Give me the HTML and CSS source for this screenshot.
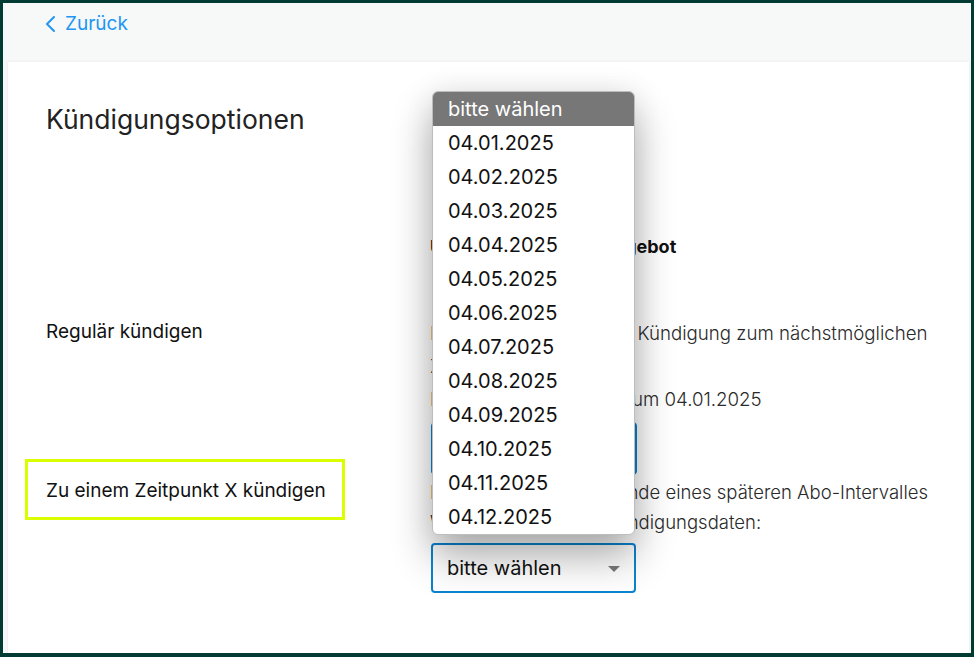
FILE: index.html
```html
<!DOCTYPE html>
<html lang="de">
<head>
<meta charset="utf-8">
<title>Kündigungsoptionen</title>
<link rel="stylesheet" href="styles.css">
</head>
<body>
<div class="frame">
  <div class="topbar">
    <a class="back" href="#">
      <svg class="chev" width="12" height="18" viewBox="0 0 12 18"><polyline points="9,2 2,9 9,16" fill="none" stroke="#2196f3" stroke-width="2" stroke-linecap="round" stroke-linejoin="round"/></svg>
      <span>Zurück</span>
    </a>
  </div>
  <div class="card">
    <h1 class="title">Kündigungsoptionen</h1>
    <div class="grid">
      <div></div>
      <div class="offer">Übersicht zu Ihrem Angebot</div>

      <div class="label label-regular">Regulär kündigen</div>
      <div class="col col-regular">
        <p class="txt">Beantragen Sie hier die Kündigung zum nächstmöglichen<br>Zeitpunkt.</p>
        <p class="txt">Ihr Vertrag endet also zum 04.01.2025</p>
        <button class="btn">Jetzt kündigen</button>
      </div>

      <div class="label-cell"><div class="label boxed">Zu einem Zeitpunkt X kündigen</div></div>
      <div class="col col-later">
        <p class="txt2">Kündigen Sie so zum Ende eines späteren Abo-Intervalles</p>
        <p class="txt2">Wählen Sie eins der Kündigungsdaten:</p>
        <div class="select-wrap">
          <div class="select">
            <span>bitte wählen</span>
            <span class="caret"></span>
          </div>
          <ul class="dropdown">
            <li class="opt active">bitte wählen</li>
            <li class="opt">04.01.2025</li>
            <li class="opt">04.02.2025</li>
            <li class="opt">04.03.2025</li>
            <li class="opt">04.04.2025</li>
            <li class="opt">04.05.2025</li>
            <li class="opt">04.06.2025</li>
            <li class="opt">04.07.2025</li>
            <li class="opt">04.08.2025</li>
            <li class="opt">04.09.2025</li>
            <li class="opt">04.10.2025</li>
            <li class="opt">04.11.2025</li>
            <li class="opt">04.12.2025</li>
          </ul>
        </div>
      </div>
    </div>
  </div>
</div>
</body>
</html>
```
FILE: styles.css
```css
* { box-sizing: border-box; }
html, body { margin: 0; padding: 0; }
body {
  font-family: Inter, "Noto Sans", sans-serif;
  background: #023a34;
}
.frame {
  width: 974px;
  height: 657px;
  border: 3px solid #023a34;
  border-bottom-width: 4px;
  background: #f7f8f8;
  display: flex;
  flex-direction: column;
  overflow: hidden;
}
.topbar {
  flex: 0 0 59px;
  height: 59px;
  padding: 9px 0 0 42px;
}
.back {
  display: inline-flex;
  align-items: center;
  gap: 8px;
  color: #2196f3;
  text-decoration: none;
  font-size: 19px;
  line-height: 24px;
}
.chev { display: block; }
.card {
  flex: 1 1 auto;
  min-height: 0;
  margin: 0 2px 0 5px;
  background: #fff;
  box-shadow: 0 0 4px rgba(0,0,0,0.06);
  padding: 42px 38px 0 38px;
}
.title {
  margin: 0;
  font-size: 26.5px;
  line-height: 30px;
  font-weight: 400;
  color: #222;
}
.grid {
  display: grid;
  grid-template-columns: 384px 1fr;
}
.offer {
  margin-top: 98px;
  font-weight: 700;
  font-size: 18px;
  line-height: 30px;
  color: #111;
  white-space: nowrap;
}
.label {
  font-size: 19px;
  line-height: 30px;
  color: #111;
  white-space: nowrap;
}
.label-regular { margin-top: 55px; }
.col-regular { margin-top: 55px; }
.txt {
  margin: 0;
  font-size: 18.7px;
  font-weight: 300;
  line-height: 33px;
  color: #2a2a2a;
  white-space: nowrap;
}
.btn {
  display: block;
  margin-top: 6px;
  width: 206px;
  height: 53px;
  border: 1px solid #0a84d0;
  border-radius: 4px;
  background: #0a84d0;
  color: #fff;
  font-family: inherit;
  font-size: 19px;
  margin-left: 1px;
}
.boxed {
  display: inline-block;
  margin-top: -16px;
  margin-left: -21px;
  border: 3px solid #dcff00;
  padding: 14px 16px 11px 18px;
}
.col-later { padding-top: 2px; }
.txt2 {
  margin: 0;
  font-size: 18.5px;
  font-weight: 300;
  line-height: 30px;
  color: #2a2a2a;
  white-space: nowrap;
}
.select-wrap {
  position: relative;
  margin-top: 6px;
  margin-left: 1px;
  width: 205px;
}
.select {
  height: 50px;
  border: 2px solid #0a84d0;
  border-radius: 4px;
  background: #fff;
  display: flex;
  align-items: center;
  justify-content: space-between;
  padding: 0 14px 0 14px;
  font-size: 20px;
  color: #111;
}
.caret {
  width: 0; height: 0;
  border-left: 6px solid transparent;
  border-right: 6px solid transparent;
  border-top: 6px solid #7a7a7a;
  margin-top: 2px;
}
.dropdown {
  position: absolute;
  left: 1px;
  bottom: calc(100% + 8px);
  width: 203px;
  margin: 0;
  padding: 0;
  list-style: none;
  background: #fff;
  border: 1px solid #bdbdbd;
  border-radius: 6px;
  overflow: hidden;
  box-shadow: 0 22px 40px rgba(0,0,0,0.32), 0 0 30px rgba(0,0,0,0.08);
}
.opt {
  height: 34px;
  line-height: 34px;
  padding-left: 15px;
  font-size: 20px;
  color: #111;
}
.opt.active {
  background: #777;
  color: #fff;
}
```
